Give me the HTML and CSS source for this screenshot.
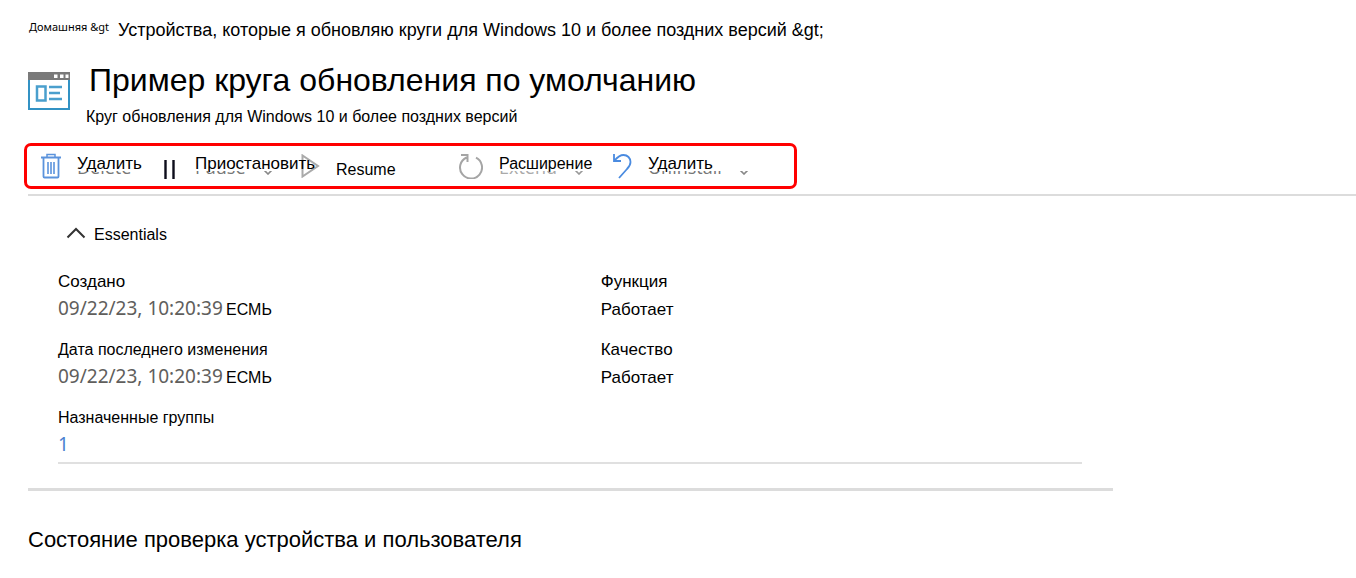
FILE: index.html
```html
<!DOCTYPE html>
<html lang="ru">
<head>
<meta charset="utf-8">
<title>Пример круга обновления по умолчанию</title>
<link rel="stylesheet" href="styles.css">
</head>
<body>
<nav class="breadcrumb" aria-label="Навигация">
  <a class="crumb-home" href="#">Домашняя &amp;gt</a>
  <a class="crumb" href="#">Устройства, которые я обновляю круги для Windows 10 и более поздних версий &amp;gt;</a>
</nav>
<header class="page-header">
  <svg class="page-icon" width="42" height="38" viewBox="0 0 42 38" aria-hidden="true">
    <rect x="1" y="1" width="40" height="36" fill="#fff" stroke="#3292c4" stroke-width="2"/>
    <path d="M0 0h42v8H0z" fill="#7a7a7a"/>
    <path d="M26 2.500h3.500v3.500H26zM32 2.500h3.500v3.500H32zM37.500 2.500h3v3.500h-3z" fill="#fff"/>
    <rect x="9" y="14.500" width="8.500" height="14" fill="#fff" stroke="#4a9fcd" stroke-width="2.500"/>
    <path d="M21 15h13M21 21h11M21 27h13" stroke="#4a9fcd" stroke-width="2.500"/>
  </svg>
  <div class="titles">
    <h1 class="title">Пример круга обновления по умолчанию</h1>
    <p class="subtitle">Круг обновления для Windows 10 и более поздних версий</p>
  </div>
</header>
<div class="toolbar-row">
  <div class="toolbar" role="toolbar">
    <button class="command" type="button">
      <svg width="20" height="26" viewBox="0 0 20 26" fill="none" stroke="#5b93dc" aria-hidden="true">
        <path d="M0 4.500h20" stroke-width="2"/><path d="M6 4V1.500h8V4" stroke-width="1.500"/>
        <path d="M2.500 5v18.500q0 1 1 1h13q1 0 1-1V5" stroke-width="1.800"/>
        <path d="M7 9v12M10 9v12M13 9v12" stroke-width="1.600"/>
      </svg>
      <span class="label">Удалить<span class="under" aria-hidden="true"><span>Delete</span></span></span>
    </button>
    <button class="command" type="button">
      <svg class="pause" width="16" height="19" viewBox="0 0 16 19" aria-hidden="true"><path d="M2.500 0v19M10.500 0v19" stroke="#0d0d1c" stroke-width="2.400"/></svg>
      <span class="label">Приостановить<span class="under" aria-hidden="true"><span>Pause</span><svg class="under-chevron" width="10" height="6" viewBox="0 0 10 6"><path d="M1 1l4 4 4-4" fill="none" stroke="#888" stroke-width="1.600"/></svg></span></span>
    </button>
    <button class="command" type="button">
      <svg width="20" height="24" viewBox="0 0 20 24" aria-hidden="true"><path d="M2.500 1.500v21L18 12z" fill="none" stroke="#aaa" stroke-width="2"/></svg>
      <span class="label label-low">Resume</span>
    </button>
    <button class="command" type="button">
      <svg width="24" height="26" viewBox="0 0 24 26" fill="none" stroke="#a5a5a5" stroke-width="2" aria-hidden="true"><path d="M17 4.700A11 11 0 1 1 7.500 4.500M2 2h6.500v7"/></svg>
      <span class="label label-small">Расширение<span class="under under-light" aria-hidden="true"><span>Extend</span><svg class="under-chevron" width="10" height="6" viewBox="0 0 10 6"><path d="M1 1l4 4 4-4" fill="none" stroke="#999" stroke-width="1.600"/></svg></span></span>
    </button>
    <button class="command" type="button">
      <svg width="20" height="26" viewBox="0 0 20 26" fill="none" stroke="#4a8be0" stroke-width="1.800" aria-hidden="true"><path d="M2 1v7h7M2.500 7.500C6 3.500 8.500 2 11.500 2c4 0 7 3 7 7 0 3-1.500 5-3.500 7L7 25"/></svg>
      <span class="label">Удалить<span class="under" aria-hidden="true"><span>Uninstall</span><svg class="under-chevron" width="10" height="6" viewBox="0 0 10 6"><path d="M1 1l4 4 4-4" fill="none" stroke="#888" stroke-width="1.600"/></svg></span></span>
    </button>
  </div>
</div>
<main class="content">
  <section class="essentials">
    <button class="toggle" type="button" aria-expanded="true">
      <svg class="toggle-icon" width="20" height="12" viewBox="0 0 20 12" aria-hidden="true"><path d="M1.500 10.500L10 2l8.500 8.500" fill="none" stroke="#333" stroke-width="2"/></svg>
      Essentials
    </button>
    <dl class="properties">
      <div class="property"><dt class="large">Создано</dt><dd><span class="date">09/22/23, 10:20:39</span>ЕСМЬ</dd></div>
      <div class="property"><dt class="large">Функция</dt><dd class="large">Работает</dd></div>
      <div class="property"><dt>Дата последнего изменения</dt><dd><span class="date">09/22/23, 10:20:39</span>ЕСМЬ</dd></div>
      <div class="property"><dt class="large">Качество</dt><dd class="large">Работает</dd></div>
      <div class="property"><dt>Назначенные группы</dt><dd><a class="count" href="#">1</a></dd></div>
    </dl>
  </section>
  <h2 class="section-title">Состояние проверка устройства и пользователя</h2>
</main>
</body>
</html>
```
FILE: styles.css
```css
* { box-sizing: border-box; }
body {
  margin: 0;
  padding: 18px 0 0 28px;
  background: #fff;
  color: #000;
  font-family: "Liberation Sans", Arial, sans-serif;
  font-size: 16px;
  line-height: 24px;
}
h1, h2, p, dl, dd { margin: 0; font-weight: 400; }
a { color: inherit; text-decoration: none; }
button { border: 0; padding: 0; background: none; color: inherit; font: inherit; }
svg { flex: none; display: block; }
.large { font-size: 17px; }
.breadcrumb { display: flex; gap: 9px; padding-left: 1px; }
.crumb-home { font: 11px/18px "Noto Sans", sans-serif; }
.crumb { font-size: 18px; }
.page-header { display: flex; gap: 16px; padding-top: 18px; }
.page-icon { margin-top: 12px; }
.title { padding-left: 3px; font-size: 32px; line-height: 40px; }
.subtitle { padding-top: 5px; }
.toolbar-row { margin-top: 14px; padding-bottom: 5px; border-bottom: 2px solid #dcdcdc; }
.toolbar {
  display: grid;
  grid-template-columns: 122px 137px 159px 153px 1fr;
  max-width: 773px;
  height: 46px;
  margin-left: -4px;
  padding-left: 14px;
  border: 3px solid #f00;
  border-radius: 7px;
}
.command { display: flex; align-items: center; gap: 16px; white-space: nowrap; }
.pause { margin-top: 6px; }
.label { position: relative; margin-bottom: 4px; font-size: 17px; }
.label-small { font-size: 16px; }
.label-low { margin: 7px 0 0; font-size: 16px; }
.under {
  position: absolute;
  left: 0;
  top: 19px;
  display: flex;
  align-items: flex-end;
  gap: 17px;
  height: 4px;
  overflow: hidden;
  color: #777;
  font: 18px/16px "Open Sans", sans-serif;
}
.under-light { color: #aaa; }
.content { margin-right: 243px; }
.essentials { padding: 27px 31px 24px 30px; border-bottom: 3px solid #dcdcdc; }
.toggle { display: flex; align-items: center; gap: 8px; padding-left: 8px; }
.toggle-icon { margin-bottom: 5px; }
.properties {
  display: grid;
  grid-template-columns: 53% 47%;
  row-gap: 12px;
  margin-top: 23px;
  border-bottom: 2px solid #e0e0e0;
}
.property dd { display: flex; height: 32px; line-height: 32px; }
.date { width: 168px; }
.date, .count {
  color: #605e5c;
  font-family: "Noto Sans", sans-serif;
  font-size: 19px;
  line-height: 28px;
}
.count { color: #4a7fd0; }
.section-title { margin-top: 34px; font-size: 22px; line-height: 30px; }
```
